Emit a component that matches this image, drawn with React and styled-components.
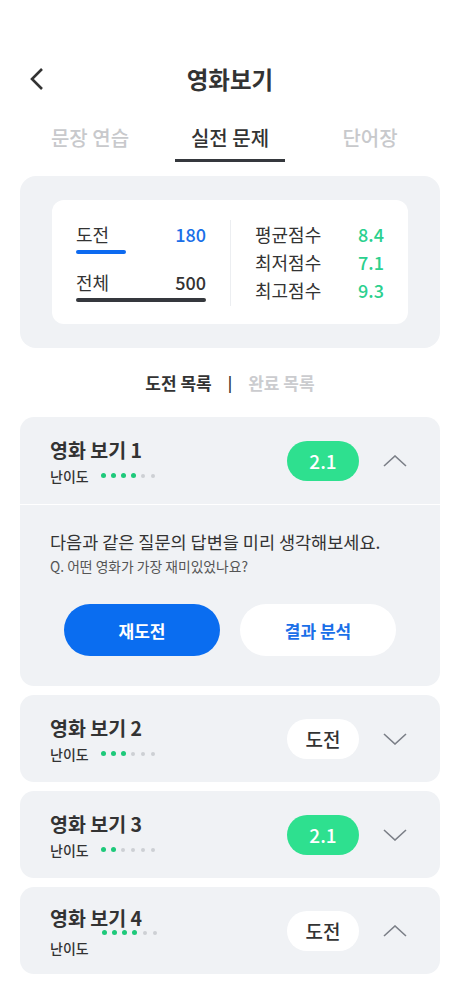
import React from "react";
import styled, { createGlobalStyle } from "styled-components";

const GlobalStyle = createGlobalStyle`
  body {
    margin: 0;
    background: #ffffff;
    font-family: "Noto Sans CJK KR", "Noto Sans", sans-serif;
    color: #333;
  }
`;

const items = [
  { id: 1, title: "영화 보기 1", level: 4, score: "2.1", open: true },
  { id: 2, title: "영화 보기 2", level: 3, score: null, open: false },
  { id: 3, title: "영화 보기 3", level: 2, score: "2.1", open: false },
  { id: 4, title: "영화 보기 4", level: 4, score: null, open: false, up: true, odd: true },
];

const Chevron = ({ dir = "down", size = 24, color = "#7b7f87", width = 1.6 }) => (
  <svg width={size} height={size / 2} viewBox="0 0 24 12">
    {dir === "down" ? (
      <polyline points="1,1 12,11 23,1" fill="none" stroke={color} strokeWidth={width} />
    ) : (
      <polyline points="1,11 12,1 23,11" fill="none" stroke={color} strokeWidth={width} />
    )}
  </svg>
);

const Dots = ({ level }) => (
  <DotRow>
    {[0, 1, 2, 3, 4, 5].map((i) => (
      <Dot key={i} $on={i < level} />
    ))}
  </DotRow>
);

export default function App() {
  return (
    <Page>
      <GlobalStyle />
      <Header>
        <Back>
          <svg width="16" height="24" viewBox="0 0 16 24">
            <polyline points="13,2 3,12 13,22" fill="none" stroke="#333" strokeWidth="2.6" />
          </svg>
        </Back>
        <Title>영화보기</Title>
      </Header>

      <Tabs>
        <Tab>문장 연습</Tab>
        <Tab $active>실전 문제</Tab>
        <Tab>단어장</Tab>
      </Tabs>

      <Summary>
        <SummaryInner>
          <LeftCol>
            <StatLine>
              <StatRow>
                <span>도전</span>
                <Num $color="#1a6fe8">180</Num>
              </StatRow>
              <Bar $color="#0d6af0" $w="50px" />
            </StatLine>
            <StatLine>
              <StatRow>
                <span>전체</span>
                <Num $color="#333">500</Num>
              </StatRow>
              <Bar $color="#35383d" $w="100%" />
            </StatLine>
          </LeftCol>
          <Divider />
          <RightCol>
            <ScoreRow>
              <span>평균점수</span>
              <Num $color="#2bd08e">8.4</Num>
            </ScoreRow>
            <ScoreRow>
              <span>최저점수</span>
              <Num $color="#2bd08e">7.1</Num>
            </ScoreRow>
            <ScoreRow>
              <span>최고점수</span>
              <Num $color="#2bd08e">9.3</Num>
            </ScoreRow>
          </RightCol>
        </SummaryInner>
      </Summary>

      <ListSwitch>
        <SwitchItem $active>도전 목록</SwitchItem>
        <Sep>|</Sep>
        <SwitchItem>완료 목록</SwitchItem>
      </ListSwitch>

      <List>
        {items.map((it) => (
          <Card key={it.id}>
            <CardHead>
              <Info>
                <ItemTitle>{it.title}</ItemTitle>
                <Meta $odd={it.odd}>
                  <MetaLabel>난이도</MetaLabel>
                  <Dots level={it.level} />
                </Meta>
              </Info>
              {it.score ? <Pill $score>{it.score}</Pill> : <Pill>도전</Pill>}
              <Toggle>
                <Chevron dir={it.open || it.up ? "up" : "down"} />
              </Toggle>
            </CardHead>
            {it.open && (
              <CardBody>
                <Question>다음과 같은 질문의 답변을 미리 생각해보세요.</Question>
                <SubQuestion>Q. 어떤 영화가 가장 재미있었나요?</SubQuestion>
                <Buttons>
                  <ActionButton $primary>재도전</ActionButton>
                  <ActionButton>결과 분석</ActionButton>
                </Buttons>
              </CardBody>
            )}
          </Card>
        ))}
      </List>
    </Page>
  );
}

const Page = styled.div`
  width: 460px;
  padding: 57px 20px 20px;
  box-sizing: border-box;
`;

const Header = styled.div`
  position: relative;
  height: 44px;
  display: flex;
  align-items: center;
  justify-content: center;
`;

const Back = styled.div`
  position: absolute;
  left: 9px;
  top: 10px;
  display: flex;
`;

const Title = styled.h1`
  margin: 0;
  font-size: 23.5px;
  font-weight: 700;
  color: #333;
  line-height: 44px;
`;

const Tabs = styled.div`
  display: grid;
  grid-template-columns: 140px 140px 140px;
  margin-top: 17px;
`;

const Tab = styled.div`
  position: relative;
  text-align: center;
  font-size: 20px;
  font-weight: 500;
  line-height: 40px;
  height: 44px;
  color: ${(p) => (p.$active ? "#333" : "#c8c9cc")};
  &::after {
    content: "";
    display: ${(p) => (p.$active ? "block" : "none")};
    position: absolute;
    left: 15px;
    right: 15px;
    bottom: 0;
    height: 3px;
    background: #35383d;
  }
`;

const Summary = styled.div`
  margin-top: 14px;
  background: #f0f2f5;
  border-radius: 16px;
  padding: 24px 32px;
`;

const SummaryInner = styled.div`
  background: #ffffff;
  border-radius: 12px;
  height: 124px;
  box-sizing: border-box;
  padding: 20px 24px 0 24px;
  display: flex;
`;

const LeftCol = styled.div`
  width: 130px;
  display: flex;
  flex-direction: column;
  gap: 14px;
`;

const StatLine = styled.div`
  display: flex;
  flex-direction: column;
`;

const StatRow = styled.div`
  display: flex;
  justify-content: space-between;
  font-size: 18px;
  line-height: 28px;
  color: #333;
`;

const Num = styled.span`
  color: ${(p) => p.$color};
  font-weight: 500;
`;

const Bar = styled.div`
  width: ${(p) => p.$w};
  height: 4px;
  border-radius: 2px;
  background: ${(p) => p.$color};
  margin-top: 2px;
`;

const Divider = styled.div`
  width: 1px;
  height: 86px;
  background: #eceef1;
  margin: 0 24px 0 24px;
`;

const RightCol = styled.div`
  width: 129px;
  display: flex;
  flex-direction: column;
`;

const ScoreRow = styled.div`
  display: flex;
  justify-content: space-between;
  font-size: 18px;
  line-height: 28px;
  color: #333;
`;

const ListSwitch = styled.div`
  display: flex;
  justify-content: center;
  align-items: center;
  gap: 16px;
  height: 69px;
`;

const SwitchItem = styled.span`
  font-size: 17px;
  font-weight: 700;
  color: ${(p) => (p.$active ? "#333" : "#cbcccf")};
`;

const Sep = styled.span`
  font-size: 15px;
  font-weight: 700;
  color: #333;
`;

const List = styled.div`
  display: flex;
  flex-direction: column;
  gap: 9px;
`;

const Card = styled.div`
  background: #f0f2f5;
  border-radius: 14px;
  overflow: hidden;
`;

const CardHead = styled.div`
  height: 87px;
  box-sizing: border-box;
  padding: 0 30px 0 30px;
  display: flex;
  align-items: center;
`;

const Info = styled.div`
  flex: 1;
  display: flex;
  flex-direction: column;
`;

const ItemTitle = styled.div`
  font-size: 19.5px;
  font-weight: 700;
  color: #333;
  line-height: 28px;
`;

const Meta = styled.div`
  display: flex;
  align-items: center;
  gap: 12px;
  margin-top: ${(p) => (p.$odd ? "-4px" : "2px")};
  flex-direction: ${(p) => (p.$odd ? "column-reverse" : "row")};
  align-self: flex-start;
  ${(p) =>
    p.$odd &&
    `
    align-items: flex-start;
    gap: 0;
    & > div { margin-left: 52px; }
  `}
`;

const MetaLabel = styled.span`
  font-size: 14px;
  font-weight: 500;
  color: #333;
  line-height: 20px;
`;

const DotRow = styled.div`
  display: flex;
  align-items: center;
  gap: 5px;
  height: 10px;
`;

const Dot = styled.span`
  width: ${(p) => (p.$on ? "5px" : "4px")};
  height: ${(p) => (p.$on ? "5px" : "4px")};
  margin: ${(p) => (p.$on ? "0" : "0 0.5px")};
  border-radius: 50%;
  background: ${(p) => (p.$on ? "#1ec97a" : "#cdd0d4")};
`;

const Pill = styled.div`
  width: 72px;
  height: 40px;
  border-radius: 20px;
  display: flex;
  align-items: center;
  justify-content: center;
  font-size: 19px;
  font-weight: 500;
  background: ${(p) => (p.$score ? "#2ee08f" : "#ffffff")};
  color: ${(p) => (p.$score ? "#ffffff" : "#333")};
`;

const Toggle = styled.div`
  width: 24px;
  margin-left: 24px;
  margin-right: 3px;
  display: flex;
`;

const CardBody = styled.div`
  border-top: 1px solid #ffffff;
  padding: 23px 30px 30px;
`;

const Question = styled.div`
  font-size: 17.5px;
  color: #333;
  line-height: 28px;
`;

const SubQuestion = styled.div`
  font-size: 13.8px;
  color: #555;
  line-height: 20px;
  margin-top: 0;
`;

const Buttons = styled.div`
  display: flex;
  justify-content: center;
  gap: 20px;
  margin-top: 28px;
`;

const ActionButton = styled.button`
  width: 156px;
  height: 52px;
  border: none;
  border-radius: 26px;
  font-family: inherit;
  font-size: 17px;
  font-weight: 700;
  background: ${(p) => (p.$primary ? "#0a6df0" : "#ffffff")};
  color: ${(p) => (p.$primary ? "#ffffff" : "#1a6fe8")};
`;
